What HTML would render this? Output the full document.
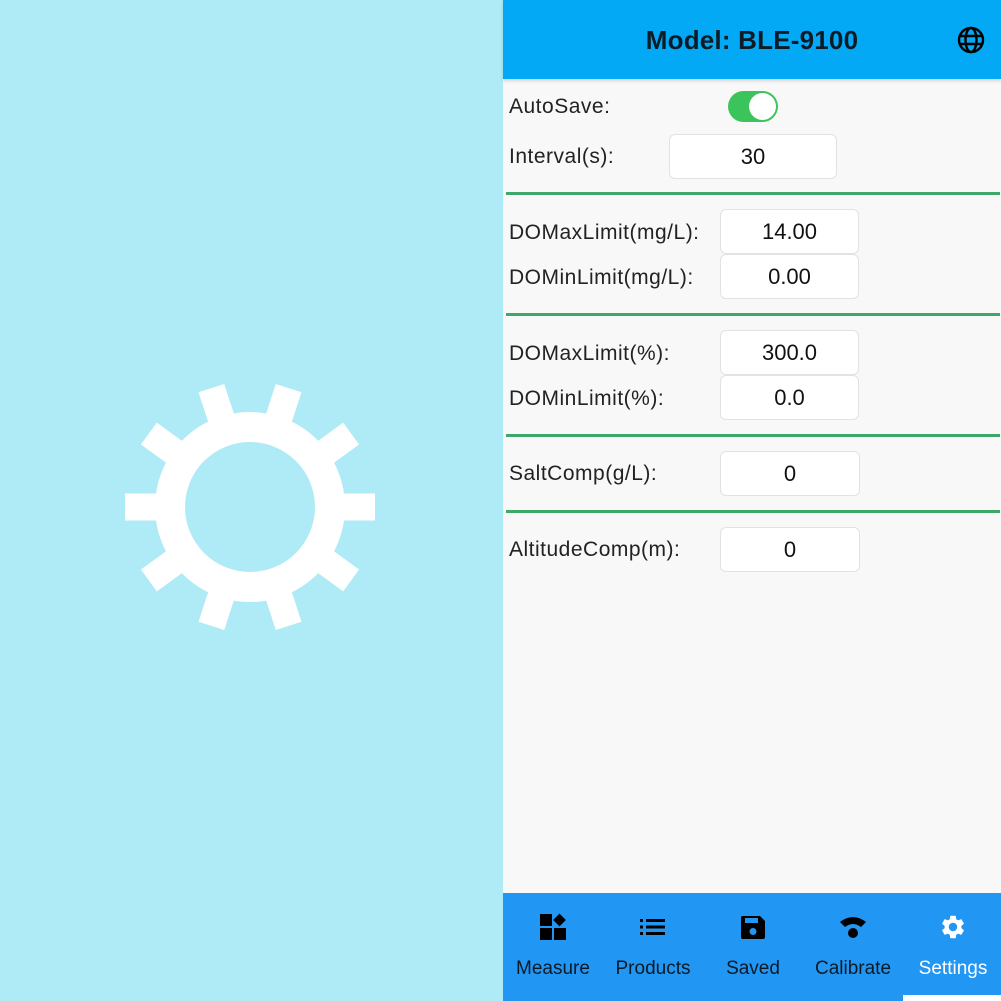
<!DOCTYPE html>
<html><head><meta charset="utf-8"><style>
*{margin:0;padding:0;box-sizing:border-box}
body{width:1001px;height:1001px;position:relative;overflow:hidden;font-family:"Liberation Sans",sans-serif;background:#f8f8f8}
.left{position:absolute;left:0;top:0;width:503px;height:1001px;background:#afebf6}
.hdr{position:absolute;left:503px;top:0;width:498px;height:79px;background:#03a9f4;box-shadow:0 2px 3px rgba(0,0,0,.15)}
.hdr .t{position:absolute;left:0;width:498px;top:25px;text-align:center;font-size:26px;color:#0d1b26;font-weight:bold;letter-spacing:.2px}
.lbl{position:absolute;left:509px;font-size:21px;color:#222;letter-spacing:.5px}
.box{position:absolute;background:#fff;border:1px solid #e2e2e2;border-radius:6px;font-size:22px;color:#111;text-align:center}
.line{position:absolute;left:506px;width:494px;height:3px;background:#3ea86a}
.bar{position:absolute;left:503px;top:893px;width:498px;height:108px;background:#2196f3}
.tab{position:absolute;top:958px;width:100px;text-align:center;font-size:19px;color:#0c1a26}
.ic{position:absolute;top:913px}
</style></head><body>
<div class="left">
<svg width="503" height="1001" style="position:absolute;left:0;top:0">
<g transform="translate(250,507)" fill="#fff">
<circle r="80" fill="none" stroke="#fff" stroke-width="30"/>
<rect x="85" y="-13.5" width="40" height="27" transform="rotate(0)"/>
<rect x="85" y="-13.5" width="40" height="27" transform="rotate(36)"/>
<rect x="85" y="-13.5" width="40" height="27" transform="rotate(72)"/>
<rect x="85" y="-13.5" width="40" height="27" transform="rotate(108)"/>
<rect x="85" y="-13.5" width="40" height="27" transform="rotate(144)"/>
<rect x="85" y="-13.5" width="40" height="27" transform="rotate(180)"/>
<rect x="85" y="-13.5" width="40" height="27" transform="rotate(216)"/>
<rect x="85" y="-13.5" width="40" height="27" transform="rotate(252)"/>
<rect x="85" y="-13.5" width="40" height="27" transform="rotate(288)"/>
<rect x="85" y="-13.5" width="40" height="27" transform="rotate(324)"/>
</g></svg>
</div>
<div class="hdr"><div class="t">Model: BLE-9100</div>
<svg style="position:absolute;left:453px;top:25px" width="30" height="30" viewBox="0 0 30 30" fill="none" stroke="#000" stroke-width="2.4">
<circle cx="15" cy="15" r="12"/><ellipse cx="15" cy="15" rx="5.5" ry="12"/><line x1="3" y1="11" x2="27" y2="11"/><line x1="3" y1="19" x2="27" y2="19"/></svg>
</div>

<div class="lbl" style="top:95px">AutoSave:</div>
<div style="position:absolute;left:728px;top:91px;width:50px;height:31px;border-radius:16px;background:#3cc45c"></div>
<div style="position:absolute;left:749px;top:93px;width:27px;height:27px;border-radius:50%;background:#fff"></div>
<div class="lbl" style="top:145px">Interval(s):</div>
<div class="box" style="left:669px;top:134px;width:168px;height:45px;line-height:43px">30</div>
<div class="line" style="top:192px"></div>

<div class="lbl" style="top:221px">DOMaxLimit(mg/L):</div>
<div class="box" style="left:720px;top:209px;width:139px;height:45px;line-height:43px">14.00</div>
<div class="lbl" style="top:266px">DOMinLimit(mg/L):</div>
<div class="box" style="left:720px;top:254px;width:139px;height:45px;line-height:43px">0.00</div>
<div class="line" style="top:313px"></div>

<div class="lbl" style="top:342px">DOMaxLimit(%):</div>
<div class="box" style="left:720px;top:330px;width:139px;height:45px;line-height:43px">300.0</div>
<div class="lbl" style="top:387px">DOMinLimit(%):</div>
<div class="box" style="left:720px;top:375px;width:139px;height:45px;line-height:43px">0.0</div>
<div class="line" style="top:434px"></div>

<div class="lbl" style="top:462px">SaltComp(g/L):</div>
<div class="box" style="left:720px;top:451px;width:140px;height:45px;line-height:43px">0</div>
<div class="line" style="top:510px"></div>

<div class="lbl" style="top:538px">AltitudeComp(m):</div>
<div class="box" style="left:720px;top:527px;width:140px;height:45px;line-height:43px">0</div>

<div class="bar"></div>
<svg class="ic" style="left:539px" width="28" height="28" viewBox="0 0 28 28" fill="#000">
<rect x="1" y="1" width="12" height="12"/><rect x="1" y="15" width="12" height="12"/><rect x="15" y="15" width="12" height="12"/><rect x="16" y="2.5" width="9" height="9" transform="rotate(45 20.5 7)"/></svg>
<svg class="ic" style="left:639px" width="28" height="28" viewBox="0 0 28 28" fill="#000">
<rect x="1" y="6" width="3" height="3"/><rect x="1" y="12.5" width="3" height="3"/><rect x="1" y="19" width="3" height="3"/>
<rect x="7" y="6" width="19" height="3"/><rect x="7" y="12.5" width="19" height="3"/><rect x="7" y="19" width="19" height="3"/></svg>
<svg class="ic" style="left:739px" width="28" height="28" viewBox="0 0 28 28">
<path d="M3 3h18l5 5v16a2 2 0 0 1-2 2H4a2 2 0 0 1-2-2V4z" fill="#000"/><rect x="6" y="5" width="13" height="5" fill="#2196f3"/><circle cx="14" cy="18.5" r="3.5" fill="#2196f3"/></svg>
<svg class="ic" style="left:839px" width="28" height="28" viewBox="0 0 28 28" fill="#000">
<path d="M1 9Q14 -1 27 9L22 14Q14 8 6 14Z"/><circle cx="14" cy="20" r="5"/></svg>
<svg class="ic" style="left:939px" width="28" height="28" viewBox="0 0 24 24" fill="#fff">
<path d="M19.14 12.94c.04-.3.06-.61.06-.94s-.02-.64-.07-.94l2.030-1.58a.49.49 0 0 0 .12-.61l-1.92-3.32a.49.49 0 0 0-.59-.22l-2.39.96c-.5-.38-1.03-.7-1.62-.94l-.36-2.54a.48.48 0 0 0-.48-.41h-3.84c-.24 0-.43.17-.47.41l-.36 2.54c-.59.24-1.13.57-1.62.94l-2.39-.96a.49.49 0 0 0-.59.22L2.74 8.870c-.12.21-.08.47.12.61l2.03 1.58c-.05.3-.09.63-.09.94s.02.64.07.94l-2.03 1.58a.49.49 0 0 0-.12.61l1.92 3.32c.12.22.37.29.59.22l2.39-.96c.5.38 1.03.7 1.62.94l.36 2.54c.05.24.24.41.48.41h3.84c.24 0 .44-.17.47-.41l.36-2.54c.59-.24 1.13-.56 1.62-.94l2.39.96c.22.08.47 0 .59-.22l1.92-3.32c.12-.22.07-.47-.12-.61l-2.01-1.58zM12 15.6c-1.98 0-3.6-1.62-3.6-3.6s1.62-3.6 3.6-3.6 3.6 1.62 3.6 3.6-1.62 3.6-3.6 3.6z"/></svg>
<div class="tab" style="left:503px">Measure</div>
<div class="tab" style="left:603px">Products</div>
<div class="tab" style="left:703px">Saved</div>
<div class="tab" style="left:803px">Calibrate</div>
<div class="tab" style="left:903px;color:#fff">Settings</div>
<div style="position:absolute;left:903px;top:995px;width:98px;height:6px;background:#fff"></div>
</body></html>
